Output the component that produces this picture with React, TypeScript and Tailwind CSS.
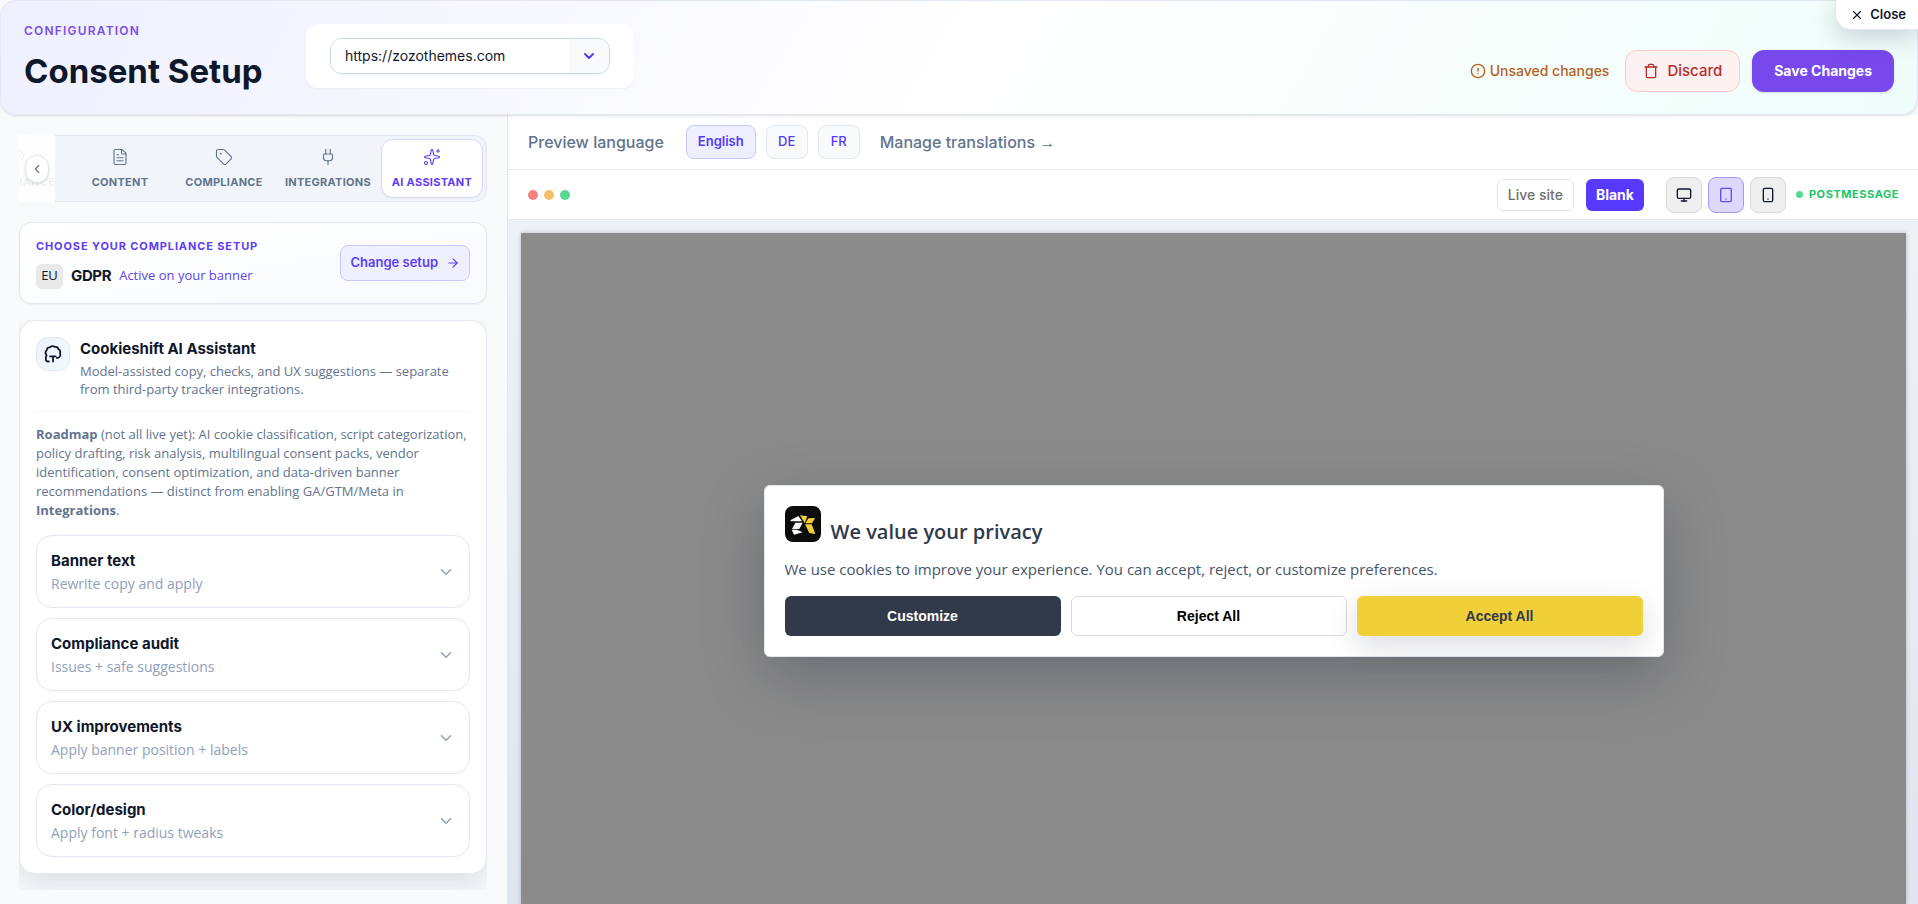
import React, { useState } from "react";
import {
  ArrowRight,
  ChevronDown,
  ChevronLeft,
  CircleAlert,
  FileText,
  LucideIcon,
  Monitor,
  Palette,
  Plug,
  Smartphone,
  Sparkles,
  Tablet,
  Tag,
  Trash,
  X,
} from "lucide-react";
import clsx from "clsx";

interface ITab {
  label: string;
  icon: LucideIcon;
}

const tabs: ITab[] = [
  { label: "Appearance", icon: Palette },
  { label: "Content", icon: FileText },
  { label: "Compliance", icon: Tag },
  { label: "Integrations", icon: Plug },
  { label: "AI Assistant", icon: Sparkles },
];

const tools = [
  { title: "Banner text", hint: "Rewrite copy and apply" },
  { title: "Compliance audit", hint: "Issues + safe suggestions" },
  { title: "UX improvements", hint: "Apply banner position + labels" },
  { title: "Color/design", hint: "Apply font + radius tweaks" },
];

const languages = ["English", "DE", "FR"];

const devices: ITab[] = [
  { label: "Desktop", icon: Monitor },
  { label: "Tablet", icon: Tablet },
  { label: "Mobile", icon: Smartphone },
];

const AssistantIcon = () => (
  <svg
    viewBox="0 0 24 24"
    className="w-[18px] h-[18px] text-slate-900"
    fill="none"
    stroke="currentColor"
    strokeWidth={2.4}
    strokeLinecap="round"
    strokeLinejoin="round"
  >
    <path d="M6.5 22H5.5A3 3 0 0 1 2.5 19v-2.5c0-1 .8-1.5.8-2.5S2 12 2 10.2c0-1.8 1.2-2.7 1.8-3.7C4.2 4 6 2.8 8 3.2c1.2-2 4.6-2.3 6.3-.6 2.5-.5 4.5.9 5 3.1 2 1 2.8 3 2 5 .8 2.5.3 4.8-1.7 5.9-1 .5-1.8.6-2.6.6" />
    <path d="M8 15.2h7.5M12 15.2V22" />
  </svg>
);

const BrandLogo = () => (
  <svg viewBox="0 0 108 108" className="w-9 h-9">
    <rect width="108" height="108" rx="24" fill="#0c0c0c" />
    <path d="M16 43 40 30l11 16-33 0z" fill="#fff" />
    <path d="M31 50h22L43 69H21z" fill="#f4f4f4" />
    <path d="M20 71h16l17 8-26 7z" fill="#fff" />
    <path d="M45 28l22 3-8 20z" fill="#f0cf38" />
    <path d="M70 37l20-1-9 16H61z" fill="#f0cf38" />
    <path d="M60 55h20l11 29-18-3z" fill="#f0cf38" />
  </svg>
);

const Header = () => {
  return (
    <header className="relative flex items-start h-[115px] shrink-0 px-[23px] border border-slate-200 rounded-2xl bg-[linear-gradient(120deg,#eef0ff_0%,#ffffff_50%,#effdfa_100%)] shadow-sm">
      <div className="pt-5 w-[282px]">
        <p className="text-xs leading-5 font-semibold tracking-widest uppercase text-[#7c4dea]">
          Configuration
        </p>
        <h1 className="mt-2 text-[33px] leading-[44px] font-bold text-slate-900">
          Consent Setup
        </h1>
      </div>
      <div className="mt-[23px] py-3.5 px-6 w-[328px] bg-white rounded-xl shadow-xs">
        <div className="flex h-9 rounded-xl border border-slate-300 overflow-hidden shadow-xs">
          <select
            aria-label="Website"
            className="appearance-none grow pl-3.5 text-sm text-slate-900 bg-white outline-none"
          >
            <option>https://zozothemes.com</option>
          </select>
          <span className="flex items-center justify-center w-10 bg-slate-50 text-[#5639fb] pointer-events-none">
            <ChevronDown size={16} strokeWidth={3} />
          </span>
        </div>
      </div>
      <div className="flex items-center gap-3 ml-auto pt-[49px]">
        <p className="flex items-center gap-1 mr-1 text-sm font-medium text-[#b4631f]">
          <CircleAlert size={16} />
          Unsaved changes
        </p>
        <button className="flex items-center gap-2 h-[42px] px-[17px] rounded-xl border border-[#fbcaca] bg-[#fdf1f1] text-[15px] font-medium text-[#b92c2c]">
          <Trash size={16} />
          Discard
        </button>
        <button className="h-[42px] px-[22px] rounded-xl bg-[#7848ec] text-sm font-bold text-white shadow-sm">
          Save Changes
        </button>
      </div>
      <button className="absolute -top-px -right-px flex items-center gap-1.5 h-[30px] pl-3.5 pr-3 rounded-bl-2xl bg-white text-[13px] font-semibold text-slate-900 border-l border-b border-slate-200 shadow-[0_8px_24px_rgba(15,23,42,0.18)]">
        <X size={14} />
        Close
      </button>
    </header>
  );
};

const SidebarTabs = () => {
  const [active, setActive] = useState("AI Assistant");

  return (
    <div className="relative">
      <nav className="flex justify-end gap-0.5 p-[3px] h-[67px] rounded-xl border border-slate-200 bg-slate-100 overflow-hidden">
        {tabs.map(({ label, icon: Icon }) => (
          <button
            key={label}
            onClick={() => setActive(label)}
            className={clsx(
              "flex flex-col items-center justify-center gap-2 w-[102px] shrink-0 rounded-xl text-[11px] leading-4 font-bold tracking-wide uppercase",
              active === label
                ? "bg-white border border-[#ddd6fe] text-[#5f3cf5] shadow-xs"
                : "text-slate-500"
            )}
          >
            <Icon size={18} strokeWidth={1.5} />
            {label}
          </button>
        ))}
      </nav>
      {/* fades the tabs that are scrolled out to the left */}
      <div className="absolute left-0 inset-y-0 flex items-center justify-center w-9 bg-white/90">
        <button
          aria-label="Scroll tabs left"
          className="flex items-center justify-center w-6 h-7 rounded-xl border border-slate-200 bg-white text-slate-500 shadow-sm"
        >
          <ChevronLeft size={14} />
        </button>
      </div>
    </div>
  );
};

const ComplianceCard = () => {
  return (
    <section className="flex items-center justify-between mt-5 h-[82px] px-4 rounded-xl border border-slate-200 bg-gradient-to-br from-white to-slate-50 shadow-xs">
      <div>
        <h2 className="text-[11px] leading-4 font-bold tracking-[0.08em] uppercase text-[#5f3cf5]">
          Choose your compliance setup
        </h2>
        <div className="flex items-center gap-2 mt-2.5">
          <span className="flex items-center justify-center w-[27px] h-[25px] rounded-md bg-[#e9e9e9] font-['Open_Sans',sans-serif] text-[13px] text-slate-900">
            EU
          </span>
          <b className="text-[15px] tracking-tight text-slate-900">GDPR</b>
          <span className="font-['Open_Sans',sans-serif] text-[13px] text-[#5c46e8]">
            Active on your banner
          </span>
        </div>
      </div>
      <button className="flex items-center gap-2 h-9 px-[9px] rounded-lg border border-[#c7c8ff] bg-[#eef0ff] text-[13px] font-semibold text-[#5f3cf5]">
        Change setup
        <ArrowRight size={14} />
      </button>
    </section>
  );
};

const AssistantCard = () => {
  return (
    <div className="mt-4 pb-4 overflow-hidden">
      <section className="p-4 rounded-2xl border border-slate-200 bg-white shadow-[0_10px_30px_rgba(15,23,42,0.12)]">
        <div className="flex gap-2.5 pb-[13px] border-b border-slate-100">
          <div className="flex items-center justify-center w-[34px] h-[34px] shrink-0 rounded-xl border border-slate-200 bg-gradient-to-br from-[#eef0ff] to-[#effdfa]">
            <AssistantIcon />
          </div>
          <div>
            <h2 className="text-[15px] leading-6 font-bold text-slate-900">
              Cookieshift AI Assistant
            </h2>
            <p className="mt-px font-['Open_Sans',sans-serif] text-[13px] leading-[18px] text-slate-500">
              Model-assisted copy, checks, and UX suggestions — separate from
              third-party tracker integrations.
            </p>
          </div>
        </div>
        <p className="mt-[13px] font-['Open_Sans',sans-serif] text-[13px] leading-[19px] text-slate-500">
          <b>Roadmap</b> (not all live yet): AI cookie classification, script
          categorization, policy drafting, risk analysis, multilingual consent
          packs, vendor identification, consent optimization, and data-driven
          banner recommendations — distinct from enabling GA/GTM/Meta in{" "}
          <b>Integrations</b>.
        </p>
        <div className="flex flex-col gap-2.5 mt-[15px]">
          {tools.map((tool) => (
            <button
              key={tool.title}
              className="flex items-center justify-between h-[73px] px-3.5 rounded-2xl border border-slate-200 text-left"
            >
              <span>
                <span className="block text-[15px] leading-6 font-bold text-slate-900">
                  {tool.title}
                </span>
                <span className="block font-['Open_Sans',sans-serif] text-sm leading-[22px] text-slate-400">
                  {tool.hint}
                </span>
              </span>
              <ChevronDown size={18} className="text-slate-400" />
            </button>
          ))}
        </div>
      </section>
    </div>
  );
};

const LanguageBar = () => {
  const [language, setLanguage] = useState("English");

  return (
    <div className="flex items-center h-[55px] px-5 shrink-0 bg-white border-b border-slate-200">
      <span className="text-base font-medium text-slate-500">
        Preview language
      </span>
      <div className="flex gap-2.5 ml-[22px] mr-5">
        {languages.map((lang) => (
          <button
            key={lang}
            onClick={() => setLanguage(lang)}
            className={clsx(
              "h-[34px] px-[11px] min-w-[42px] rounded-lg border text-[13px] text-[#5639fb]",
              lang === language
                ? "border-[#c7c8ff] bg-[#eef0ff] font-semibold"
                : "border-slate-200 bg-slate-50 font-medium"
            )}
          >
            {lang}
          </button>
        ))}
      </div>
      <a href="#translations" className="text-base font-medium text-slate-500">
        Manage translations{" "}
        <span className="font-['Open_Sans',sans-serif]">→</span>
      </a>
    </div>
  );
};

const PreviewToolbar = () => {
  const [device, setDevice] = useState("Tablet");

  return (
    <div className="flex items-center h-[50px] pl-5 pr-[19px] shrink-0 bg-white border-b border-slate-200">
      <div className="flex gap-1.5">
        <span className="w-2.5 h-2.5 rounded-full bg-[#f2827d]" />
        <span className="w-2.5 h-2.5 rounded-full bg-[#f4c069]" />
        <span className="w-2.5 h-2.5 rounded-full bg-[#58d892]" />
      </div>
      <div className="flex gap-3 ml-auto">
        <button className="h-8 px-2.5 rounded-md border border-[#e5e5e5] bg-white text-sm font-medium text-[#6f6f6f]">
          Live site
        </button>
        <button className="h-8 px-2.5 rounded-md bg-[#5639fb] text-sm font-bold text-white">
          Blank
        </button>
      </div>
      <div className="flex gap-1.5 ml-[22px]">
        {devices.map(({ label, icon: Icon }) => (
          <button
            key={label}
            aria-label={label}
            onClick={() => setDevice(label)}
            className={clsx(
              "flex items-center justify-center w-9 h-9 rounded-lg border",
              device === label
                ? "border-[#a594fb] bg-[#ddd8ff] text-[#6a45fa]"
                : "border-[#d8d8d8] bg-[#efefef] text-slate-900"
            )}
          >
            <Icon size={16} />
          </button>
        ))}
      </div>
      <span className="flex items-center gap-1.5 ml-2.5 text-[11px] font-bold tracking-wider uppercase text-[#22c566]">
        <span className="w-[7px] h-[7px] rounded-full bg-[#55da8c]" />
        postMessage
      </span>
    </div>
  );
};

const ConsentBanner = () => {
  return (
    <div className="w-full max-w-[900px] p-5 rounded-md border border-slate-200 bg-white shadow-[0_20px_60px_rgba(15,23,42,0.25)]">
      <div className="flex items-start gap-2.5">
        <BrandLogo />
        <h2 className="pt-2.5 font-['Open_Sans',sans-serif] text-xl leading-8 font-semibold text-[#303a4b]">
          We value your privacy
        </h2>
      </div>
      <p className="mt-[9px] font-['Open_Sans',sans-serif] text-[15px] leading-6 text-slate-600">
        We use cookies to improve your experience. You can accept, reject, or
        customize preferences.
      </p>
      <div className="grid grid-cols-[276fr_276fr_286fr] gap-2.5 mt-[15px] font-['Liberation_Sans',Arial,sans-serif] text-sm font-bold">
        <button className="h-10 rounded-md bg-[#303a4b] text-white">
          Customize
        </button>
        <button className="h-10 rounded-md border border-[#d9dbdf] bg-white text-black">
          Reject All
        </button>
        <button className="h-10 rounded-md bg-[#f0cf38] text-[#303a4b] shadow-[0_10px_30px_rgba(15,23,42,0.15)]">
          Accept All
        </button>
      </div>
    </div>
  );
};

const App = (): React.JSX.Element => {
  return (
    <div className="flex flex-col h-screen overflow-hidden bg-slate-50 font-['Inter',sans-serif]">
      <Header />
      <div className="flex flex-1 min-h-0">
        <aside className="w-[508px] shrink-0 pl-[19px] pr-5 pt-5 border-r border-slate-200">
          <SidebarTabs />
          <ComplianceCard />
          <AssistantCard />
        </aside>
        <main className="flex flex-col flex-1 min-w-0">
          <LanguageBar />
          <PreviewToolbar />
          <div className="flex flex-1 pt-[13px] pl-[13px] pr-3 bg-gradient-to-b from-[#eef1f6] to-[#e0e5ef]">
            <div className="flex flex-1 items-center justify-center pt-1 bg-[#8b8b8b] shadow-[0_0_4px_rgba(71,85,105,0.35)]">
              <ConsentBanner />
            </div>
          </div>
        </main>
      </div>
    </div>
  );
};

export default App;
